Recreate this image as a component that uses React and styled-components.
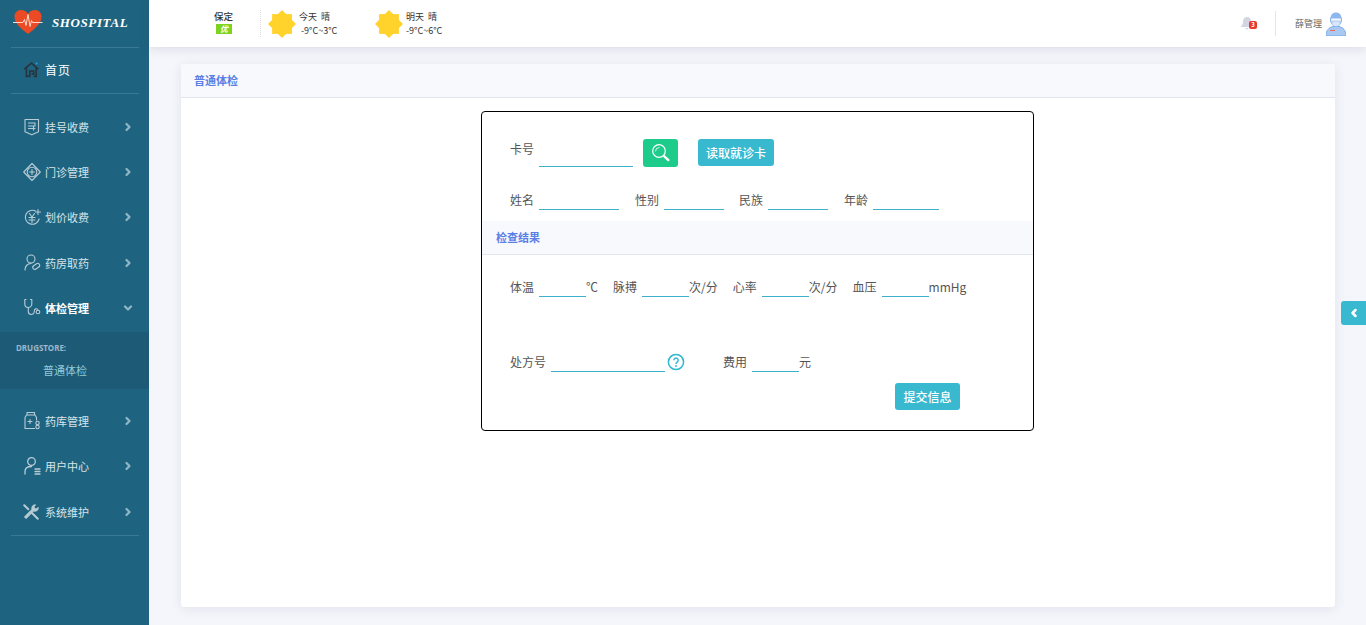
import React from "react";
import styled, { createGlobalStyle } from "styled-components";
import { ChevronRight, ChevronDown, ChevronLeft } from "lucide-react";

const GlobalStyle = createGlobalStyle`
  html, body {
    margin: 0;
    padding: 0;
    height: 100%;
    overflow: hidden;
    background: #f5f6fb;
    font-family: "Noto Sans CJK SC", "Noto Sans", sans-serif;
  }
  * { box-sizing: border-box; }
`;

const iconProps = {
  width: 20,
  height: 20,
  viewBox: "0 0 20 20",
  fill: "none",
  stroke: "#b9ccd6",
  strokeWidth: 1.1,
  strokeLinecap: "round",
  strokeLinejoin: "round",
};

const ICONS = {
  register: (
    <svg {...iconProps}>
      <path d="M3 2.5h13.5v12.2l-6.7 3-6.800-3z" />
      <path d="M6.500 6h6.500v3H6.500M6.500 11.500h6.500M11.500 9v4" />
    </svg>
  ),
  clinic: (
    <svg {...iconProps}>
      <path d="M10 1.500l8.300 8.500-8.300 8.500L1.700 10z" />
      <circle cx="10" cy="10" r="4.800" />
      <path d="M10 7.500v5M7.500 10h5" />
    </svg>
  ),
  price: (
    <svg {...iconProps}>
      <path d="M13.500 4a7 7 0 1 0 3.600 8" />
      <path d="M7.500 6.500l2.500 3.500 2.500-3.500M7 10.500h6M7 13h6M10 10v5.500" />
      <path d="M16 2.500v5M13.500 5h5" />
    </svg>
  ),
  pharmacy: (
    <svg {...iconProps}>
      <circle cx="9" cy="6" r="4" />
      <path d="M3 17c0-4 2.500-6.500 6-6.500" />
      <rect x="10.500" y="11.500" width="7.500" height="4" rx="2" transform="rotate(-35 14 13.500)" />
    </svg>
  ),
  checkup: (
    <svg {...iconProps}>
      <path d="M4 1.500H2.800v4.500a3.500 3.500 0 0 0 7 0V1.500H8.500" />
      <path d="M6.300 9.500v4a3 3 0 0 0 6 0v-1a2 2 0 0 1 3.500-1" />
      <circle cx="16" cy="14" r="1.800" />
    </svg>
  ),
  storage: (
    <svg {...iconProps}>
      <path d="M5 1.500h7.500v2.500H5zM4.500 4L3 6.500v11h9.500" />
      <path d="M13 4l1.500 2.500v2.500" />
      <path d="M6 10.500h4M8 8.500v4" />
      <circle cx="15.500" cy="12" r="1.700" />
      <circle cx="15.500" cy="16" r="1.700" />
    </svg>
  ),
  user: (
    <svg {...iconProps} strokeWidth={1.300}>
      <circle cx="9.500" cy="5.500" r="3.800" />
      <path d="M3 18v-2.500c0-3 2.500-5 6.500-5" />
      <path d="M13 13h5M13 15.500h5M13 18h5" />
    </svg>
  ),
  tools: (
    <svg {...iconProps} width={18} height={18} strokeWidth={2.200}>
      <path d="M2.500 2.500l4.500 4.500M10 10l7.500 7.500" />
      <path d="M18 5.200a3.800 3.800 0 0 1-5.200 3.500L4.500 17 3 15.500l8.300-8.300A3.800 3.800 0 0 1 14.800 2l-2 2.500 2.700 2.700z" strokeWidth={1.200} fill="#b9ccd6" />
    </svg>
  ),
};

const MENU_TOP = [
  { key: "register", label: "挂号收费" },
  { key: "clinic", label: "门诊管理" },
  { key: "price", label: "划价收费" },
  { key: "pharmacy", label: "药房取药" },
  { key: "checkup", label: "体检管理", open: true },
];

const MENU_BOTTOM = [
  { key: "storage", label: "药库管理" },
  { key: "user", label: "用户中心" },
  { key: "tools", label: "系统维护" },
];

function Sun() {
  return (
    <SunIcon viewBox="0 0 28 28">
      <rect x="4.100" y="4.100" width="19.800" height="19.800" fill="#ffd32c" />
      <rect x="4.100" y="4.100" width="19.800" height="19.800" fill="#ffd32c" transform="rotate(45 14 14)" />
    </SunIcon>
  );
}

function MenuEntry({ item }) {
  return (
    <MenuItem>
      <MenuIcon>{ICONS[item.key]}</MenuIcon>
      <MenuLabel $active={item.open}>{item.label}</MenuLabel>
      <Arrow>
        {item.open ? (
          <ChevronDown size={12} strokeWidth={4.500} />
        ) : (
          <ChevronRight size={12} strokeWidth={4.500} />
        )}
      </Arrow>
    </MenuItem>
  );
}

function Sidebar() {
  return (
    <Side>
      <LogoRow>
        <svg width="30" height="26" viewBox="0 0 30 26">
          <path
            d="M15 25C7 19 1.500 14 1.500 7.500 1.500 3.500 4.500 1 8 1c3 0 5.500 1.500 7 4 1.500-2.500 4-4 7-4 3.500 0 6.500 2.500 6.500 6.500C28.500 14 23 19 15 25z"
            fill="#ea4a24"
          />
          <path
            d="M0 13.500h10l1.500-3 1.500 6 2-11 2 12 1.500-6 1 2h10"
            fill="none"
            stroke="#ffd9cc"
            strokeWidth="1"
          />
        </svg>
        <LogoText>SHOSPITAL</LogoText>
      </LogoRow>
      <HomeRow>
        <svg width="17" height="17" viewBox="0 0 20 20" fill="none" stroke="#26353f" strokeWidth="2">
          <path d="M1.500 9.500L10 2.500l8 7" />
          <path d="M4 8v10h4v-6h4.500v3.500H10M15.500 8v10h-3" />
          <circle cx="16" cy="3" r="1.200" fill="#2e9fd8" stroke="none" />
        </svg>
        <HomeLabel>首页</HomeLabel>
      </HomeRow>
      <MenuList>
        {MENU_TOP.map((item) => (
          <MenuEntry key={item.key} item={item} />
        ))}
      </MenuList>
      <SubMenu>
        <SubTitle>DRUGSTORE:</SubTitle>
        <SubItem>普通体检</SubItem>
      </SubMenu>
      <MenuListBottom>
        {MENU_BOTTOM.map((item) => (
          <MenuEntry key={item.key} item={item} />
        ))}
      </MenuListBottom>
    </Side>
  );
}

function Header() {
  return (
    <Top>
      <City>
        <CityName>保定</CityName>
        <Quality>优</Quality>
      </City>
      <Weather>
        <Sun />
        <WeatherText>
          <WeatherDay>今天&nbsp;&nbsp;晴</WeatherDay>
          <WeatherTemp $indent={2}>-9°C~3°C</WeatherTemp>
        </WeatherText>
      </Weather>
      <Weather $second>
        <Sun />
        <WeatherText>
          <WeatherDay>明天&nbsp;&nbsp;晴</WeatherDay>
          <WeatherTemp>-9°C~6°C</WeatherTemp>
        </WeatherText>
      </Weather>
      <TopRight>
        <Bell>
          <svg width="14" height="13" viewBox="0 0 14 13">
            <path
              d="M7 0c-2.600 0-4 2-4 4.500 0 2.500-1 4-2.500 5.500h13C12 8.500 11 7 11 4.500 11 2 9.600 0 7 0zM5.500 11h3L7 13z"
              fill="#d3d5e2"
            />
          </svg>
          <BellBadge>3</BellBadge>
        </Bell>
        <UserName>薛管理</UserName>
        <svg width="20" height="24" viewBox="0 0 20 24">
          <path d="M0 24c0-6 3-8.500 7-9.500h6c4 1 7 3.500 7 9.500z" fill="#a9c8f2" stroke="#6f9fe0" strokeWidth="0.800" />
          <circle cx="10" cy="8" r="5.500" fill="#f4f8ff" stroke="#7da8e4" />
          <path d="M4.500 6.500C4.500 2.500 7 .5 10 .5s5.500 2 5.500 6z" fill="#8db7ee" />
          <path d="M6 9h8v2.500c0 2-2 3-4 3s-4-1-4-3z" fill="#d9e7fb" stroke="#7da8e4" strokeWidth="0.500" />
          <path d="M4 18.500h5" stroke="#e86a5c" strokeWidth="1" />
        </svg>
      </TopRight>
    </Top>
  );
}

function Field({ label, width, after, gap }) {
  return (
    <FieldWrap $gap={gap}>
      <FieldLabel>{label}</FieldLabel>
      <Underline $width={width} />
      {after && <FieldUnit>{after}</FieldUnit>}
    </FieldWrap>
  );
}

function CheckForm() {
  return (
    <FormBox>
      <CardRow>
        <CardLabel>卡号</CardLabel>
        <CardInput />
        <SearchButton type="button">
          <svg width="20" height="20" viewBox="0 0 20 20" fill="none" stroke="#fff" strokeLinecap="round">
            <circle cx="8" cy="8" r="6.300" strokeWidth="1.200" />
            <path d="M4.500 8a3.500 3.500 0 0 1 3.500-3.500" strokeWidth="0.800" />
            <path d="M13.300 13.300l4 3.800" strokeWidth="2.400" />
          </svg>
        </SearchButton>
        <ReadButton type="button">读取就诊卡</ReadButton>
      </CardRow>
      <InfoRow>
        <Field label="姓名" width={80} />
        <Field label="性别" width={60} gap={16} />
        <Field label="民族" width={60} gap={15} />
        <Field label="年龄" width={66} gap={16} />
      </InfoRow>
      <SectionHead>检查结果</SectionHead>
      <VitalsRow>
        <Field label="体温" width={47} after="℃" />
        <Field label="脉搏" width={47} after="次/分" gap={15} />
        <Field label="心率" width={47} after="次/分" gap={15} />
        <Field label="血压" width={47} after="mmHg" gap={15} />
      </VitalsRow>
      <RecipeRow>
        <Field label="处方号" width={114} />
        <HelpIcon viewBox="0 0 18 18">
          <circle cx="9" cy="9" r="7.600" fill="none" stroke="#30b7cf" strokeWidth="1.500" />
          <path d="M6.800 7.200a2.200 2.200 0 1 1 3.400 1.900c-.8.500-1.200.9-1.200 1.900" fill="none" stroke="#30b7cf" strokeWidth="1.400" />
          <circle cx="9" cy="13" r="0.900" fill="#30b7cf" />
        </HelpIcon>
        <Field label="费用" width={47} after="元" gap={38} />
      </RecipeRow>
      <SubmitRow>
        <SubmitButton type="button">提交信息</SubmitButton>
      </SubmitRow>
    </FormBox>
  );
}

export default function App() {
  return (
    <>
      <GlobalStyle />
      <Page>
        <Sidebar />
        <Main>
          <Header />
          <Content>
            <Card>
              <CardHead>普通体检</CardHead>
              <CheckForm />
            </Card>
          </Content>
        </Main>
        <SideToggle>
          <ChevronLeft size={12} strokeWidth={5} color="#fff" />
        </SideToggle>
      </Page>
    </>
  );
}

const Page = styled.div`
  display: flex;
  width: 1366px;
  height: 625px;
  overflow: hidden;
  position: relative;
`;

const Side = styled.aside`
  width: 149px;
  flex-shrink: 0;
  background: #1e6480;
  display: flex;
  flex-direction: column;
`;

const LogoRow = styled.div`
  height: 48px;
  margin: 0 10px 0 11px;
  padding: 0 0 3px 2px;
  display: flex;
  align-items: center;
  border-bottom: 1px solid #3a7a96;
`;

const LogoText = styled.span`
  margin-left: 9px;
  padding-top: 2px;
  font-family: "Liberation Serif", serif;
  font-style: italic;
  font-weight: bold;
  font-size: 13px;
  letter-spacing: 0.600px;
  color: #fff;
`;

const HomeRow = styled.div`
  height: 46px;
  margin: 0 10px 0 11px;
  padding: 0 0 2px 12px;
  display: flex;
  align-items: center;
  border-bottom: 1px solid #3a7a96;
`;

const HomeLabel = styled.span`
  margin-left: 5px;
  font-size: 12px;
  letter-spacing: 1px;
  color: #fff;
`;

const MenuList = styled.div`
  padding-top: 10px;
`;

const MenuListBottom = styled.div`
  margin: 9px 10px 0 11px;
  padding-bottom: 1px;
  border-bottom: 1px solid #3a7a96;
`;

const MenuItem = styled.div`
  height: 45.300px;
  display: flex;
  align-items: center;
  padding-left: 22px;
  ${MenuListBottom} & {
    padding-left: 11px;
  }
`;

const MenuIcon = styled.span`
  width: 23px;
  display: flex;
  align-items: center;
`;

const MenuLabel = styled.span`
  width: 77px;
  font-size: 11px;
  color: ${(p) => (p.$active ? "#fff" : "#d6e4ea")};
  font-weight: ${(p) => (p.$active ? 700 : 400)};
`;

const Arrow = styled.span`
  display: flex;
  color: #8fb6c6;
`;

const SubMenu = styled.div`
  height: 57px;
  margin-top: 2px;
  background: #1c5a75;
  padding: 10px 0 0 16px;
`;

const SubTitle = styled.div`
  font-family: "Noto Sans", sans-serif;
  font-size: 8px;
  font-weight: 700;
  line-height: 11px;
  color: #9db8cc;
`;

const SubItem = styled.div`
  margin: 9px 0 0 27px;
  font-size: 11px;
  line-height: 16px;
  color: #93cbd9;
`;

const Main = styled.div`
  flex: 1;
  display: flex;
  flex-direction: column;
  min-width: 0;
`;

const Top = styled.header`
  height: 47px;
  flex-shrink: 0;
  background: #fff;
  box-shadow: 0 2px 10px rgba(60, 60, 90, 0.14);
  display: flex;
  align-items: center;
  padding: 0 20px 0 65px;
  position: relative;
`;

const City = styled.div`
  width: 47px;
  height: 27px;
  border-right: 1px dotted #dddddd;
  display: flex;
  flex-direction: column;
  align-items: flex-start;
`;

const CityName = styled.span`
  font-size: 9.500px;
  line-height: 12px;
  color: #333;
  font-weight: 500;
`;

const Quality = styled.span`
  width: 16px;
  height: 10px;
  margin: 2px 0 0 2px;
  background: #7ed321;
  color: #fff;
  font-size: 8px;
  line-height: 10px;
  font-style: italic;
  font-weight: 700;
  text-align: center;
`;

const Weather = styled.div`
  display: flex;
  align-items: center;
  margin-left: ${(p) => (p.$second ? "37px" : "7px")};
  width: ${(p) => (p.$second ? "auto" : "70px")};
`;

const SunIcon = styled.svg`
  width: 28px;
  height: 28px;
  flex-shrink: 0;
`;

const WeatherText = styled.div`
  margin-left: 3px;
  font-size: 9px;
  color: #333;
  display: flex;
  flex-direction: column;
`;

const WeatherDay = styled.span`
  line-height: 14px;
  white-space: nowrap;
`;

const WeatherTemp = styled.span`
  line-height: 14px;
  white-space: nowrap;
  margin-left: ${(p) => p.$indent || 0}px;
`;

const TopRight = styled.div`
  margin-left: auto;
  display: flex;
  align-items: center;
`;

const Bell = styled.div`
  position: relative;
  width: 36px;
  height: 25px;
  display: flex;
  align-items: center;
  border-right: 1px solid #e4e5ec;
  margin-right: 19px;
`;

const BellBadge = styled.span`
  position: absolute;
  left: 9px;
  top: 10px;
  width: 8px;
  height: 8px;
  border-radius: 2px;
  background: #e8392f;
  color: #fff;
  font-size: 6px;
  line-height: 8px;
  font-weight: 700;
  text-align: center;
`;

const UserName = styled.span`
  font-size: 9px;
  color: #666;
  margin-right: 4px;
`;

const Content = styled.main`
  flex: 1;
  padding: 17px 31px 18px 32px;
  min-height: 0;
`;

const Card = styled.section`
  height: 543px;
  background: #fff;
  border-radius: 3px;
  box-shadow: 0 2px 12px rgba(60, 60, 110, 0.1);
  display: flex;
  flex-direction: column;
`;

const CardHead = styled.div`
  height: 34px;
  flex-shrink: 0;
  padding-left: 13px;
  background: #f8f9fd;
  border-bottom: 1px solid #e3e5ee;
  border-radius: 3px 3px 0 0;
  font-size: 11px;
  font-weight: 700;
  line-height: 32px;
  color: #5b7fe4;
`;

const FormBox = styled.form`
  width: 553px;
  height: 320px;
  margin: 13px 0 0 300px;
  border: 1px solid #000;
  border-radius: 4px;
  display: flex;
  flex-direction: column;
  font-size: 12px;
  color: #555;
`;

const CardRow = styled.div`
  display: flex;
  padding: 27px 0 0 28px;
  height: 55px;
`;

const CardLabel = styled.label`
  line-height: 20px;
`;

const CardInput = styled.div`
  width: 94px;
  height: 28px;
  margin-left: 5px;
  border-bottom: 1px solid #3fb0cc;
`;

const SearchButton = styled.button`
  width: 35px;
  height: 28px;
  margin-left: 10px;
  padding: 0;
  border: 0;
  border-radius: 3px;
  background: #1dcb8b;
  display: flex;
  align-items: center;
  justify-content: center;
`;

const ReadButton = styled.button`
  width: 76px;
  height: 27px;
  margin-left: 20px;
  padding: 0;
  border: 0;
  border-radius: 3px;
  background: #38b9cf;
  color: #fff;
  font-family: inherit;
  font-size: 12px;
  font-weight: 500;
`;

const InfoRow = styled.div`
  display: flex;
  height: 54px;
  padding: 24px 0 0 28px;
`;

const FieldWrap = styled.div`
  display: flex;
  align-items: flex-start;
  margin-left: ${(p) => p.$gap || 0}px;
  white-space: nowrap;
`;

const FieldLabel = styled.label`
  line-height: 18px;
`;

const FieldUnit = styled.span`
  line-height: 18px;
`;

const Underline = styled.div`
  width: ${(p) => p.$width}px;
  height: 19px;
  margin-left: 5px;
  border-bottom: 1px solid #3fb0cc;
`;

const SectionHead = styled.div`
  height: 34px;
  padding-left: 14px;
  background: #f8f9fd;
  border-bottom: 1px solid #e3e5ee;
  font-size: 11px;
  font-weight: 700;
  line-height: 32px;
  color: #5b7fe4;
`;

const VitalsRow = styled.div`
  display: flex;
  height: 74px;
  padding: 23px 0 0 28px;
`;

const RecipeRow = styled.div`
  display: flex;
  height: 54px;
  padding: 24px 0 0 28px;
`;

const HelpIcon = styled.svg`
  width: 18px;
  height: 18px;
  margin-left: 2px;
`;

const SubmitRow = styled.div`
  display: flex;
  justify-content: flex-end;
  padding-right: 73px;
`;

const SubmitButton = styled(ReadButton)`
  width: 65px;
  margin-left: 0;
`;

const SideToggle = styled.div`
  position: absolute;
  right: 0;
  top: 301px;
  width: 25px;
  height: 24px;
  border-radius: 3px 0 0 3px;
  background: #38b9cf;
  display: flex;
  align-items: center;
  justify-content: center;
`;
